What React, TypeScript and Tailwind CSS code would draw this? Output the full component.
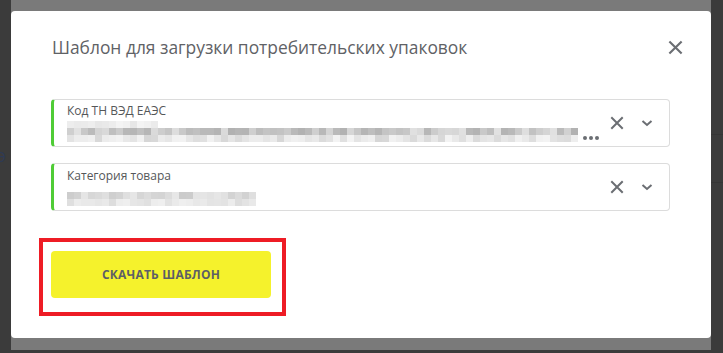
import React from 'react';

const font = { fontFamily: '"Open Sans", "Noto Sans", sans-serif' };

// deterministic pseudo-random for the pixelated (blurred) values
function shade(seed: number, min: number, max: number) {
    const x = Math.sin(seed * 12.9898) * 43758.5453;
    const r = x - Math.floor(x);
    const v = Math.round(min + r * (max - min));
    return `rgb(${v},${v},${v})`;
}

function MosaicRow({ count, seed, min, max }: { count: number; seed: number; min: number; max: number }) {
    return (
        <div className="flex h-[7px]">
            {Array.from({ length: count }).map((_, i) => (
                <div key={i} className="w-[7px] h-[7px]" style={{ background: shade(seed + i, min, max) }} />
            ))}
        </div>
    );
}

function CrossIcon({ size = 14 }: { size?: number }) {
    return (
        <svg width={size} height={size} viewBox="0 0 14 14" fill="none" stroke="#6b6e73" strokeWidth="2" strokeLinecap="square">
            <path d="M2 2L12 12M12 2L2 12" />
        </svg>
    );
}

function Chevron() {
    return (
        <svg width="12" height="8" viewBox="0 0 12 8" fill="none" stroke="#6b6e73" strokeWidth="2">
            <path d="M1.5 2L6 6L10.5 2" />
        </svg>
    );
}

function Field({ label, children, dots }: { label: string; children: React.ReactNode; dots?: boolean }) {
    return (
        <div className="relative h-[48px] rounded-[4px] border border-[#dcdcdc] border-l-[3px] border-l-[#4fcc36] flex items-center pl-[13px] pr-[16px]">
            <div className="flex-1 flex flex-col">
                <div className="text-[12px] leading-[16px] text-[#555759] mt-[-1px]">{label}</div>
                <div className="relative mt-[2px]">{children}</div>
            </div>
            {dots && (
                <div className="absolute left-[529px] top-[36px] flex gap-[2px]">
                    <span className="w-[4px] h-[4px] rounded-full bg-[#6b6e73]" />
                    <span className="w-[4px] h-[4px] rounded-full bg-[#6b6e73]" />
                    <span className="w-[4px] h-[4px] rounded-full bg-[#6b6e73]" />
                </div>
            )}
            <div className="flex items-center gap-[17px] ml-auto">
                <CrossIcon />
                <Chevron />
            </div>
        </div>
    );
}

export default function App() {
    return (
        <div className="w-[723px] h-[353px] bg-[#3b3b3b] flex overflow-hidden" style={font}>
            {/* left strip of the page behind the overlay */}
            <div className="w-[11px] shrink-0 relative overflow-hidden">
                <span className="absolute left-[-3px] top-[146px] text-[14px] text-[#2e3a55]">Э</span>
            </div>

            <div className="w-[700px] shrink-0 h-[350px] bg-[#7a7a7a] pt-[11px] pb-[12px] flex flex-col">
                <div className="flex-1 bg-white rounded-[4px] px-[40px] pt-[24px] flex flex-col">
                    {/* Header */}
                    <div className="flex items-center justify-between h-[24px]">
                        <h2 className="text-[17.4px] leading-[24px] text-[#5f6266] font-medium pl-[1px]">
                            Шаблон для загрузки потребительских упаковок
                        </h2>
                        <div className="mr-[-12px]">
                            <CrossIcon size={15} />
                        </div>
                    </div>

                    {/* Fields */}
                    <div className="mt-[40px] flex flex-col gap-[16px] w-[619px]">
                        <Field label="Код ТН ВЭД ЕАЭС" dots>
                            <MosaicRow count={13} seed={3} min={228} max={244} />
                            <MosaicRow count={73} seed={40} min={176} max={228} />
                            <MosaicRow count={73} seed={140} min={214} max={244} />
                        </Field>
                        <Field label="Категория товара">
                            <div className="h-[6px]" />
                            <MosaicRow count={27} seed={300} min={200} max={232} />
                            <MosaicRow count={27} seed={400} min={220} max={242} />
                        </Field>
                    </div>

                    {/* Download button with red highlight */}
                    <div className="mt-[27px] ml-[-12px] w-fit border-4 border-[#ee1c25] pl-[8px] pr-[11px] pt-[9px] pb-[14px]">
                        <button className="w-[220px] h-[47px] rounded-[4px] bg-[#f5f22c] text-[12px] font-bold text-[#5d5e66] tracking-[0.2px]">
                            СКАЧАТЬ ШАБЛОН
                        </button>
                    </div>
                </div>
            </div>

            <div className="flex-1 flex flex-col">
                <div className="h-[135px] border-b border-[#353535]" />
                <div className="h-[48px] border-b border-[#353535]" />
            </div>
        </div>
    );
}
